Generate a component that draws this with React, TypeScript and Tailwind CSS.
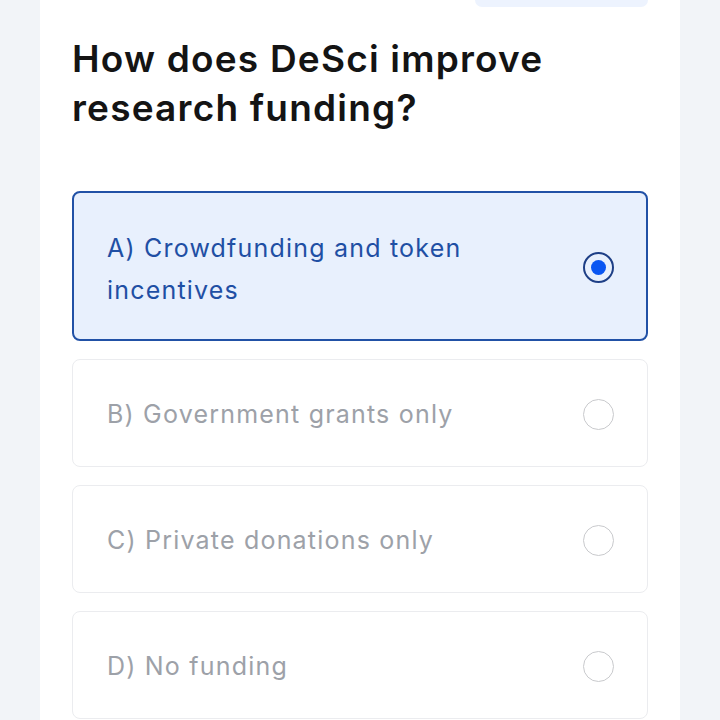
import React, { useState } from 'react';

const options = [
  { key: 'A', label: 'A) Crowdfunding and token incentives' },
  { key: 'B', label: 'B) Government grants only' },
  { key: 'C', label: 'C) Private donations only' },
  { key: 'D', label: 'D) No funding' },
];

const Radio: React.FC<{ checked: boolean }> = ({ checked }) =>
  checked ? (
    <span className="mb-1 flex h-[31px] w-[31px] shrink-0 items-center justify-center rounded-full border-2 border-[#1e3f86]">
      <span className="h-[15px] w-[15px] rounded-full bg-[#0a56f2]" />
    </span>
  ) : (
    <span className="h-[31px] w-[31px] shrink-0 rounded-full border-[1.5px] border-[#c9cacd]" />
  );

export default function App() {
  const [selected, setSelected] = useState('A');

  return (
    <div className="min-h-[720px] bg-[#f2f4f8] px-10" style={{ fontFamily: 'Inter, "Noto Sans", sans-serif' }}>
      <div className="min-h-[720px] bg-white px-8">
        <div className="flex justify-end">
          <div className="h-[7px] w-[173px] rounded-b-lg bg-[#edf3fe]" />
        </div>

        <h1 className="mt-[27px] text-[37px] font-semibold leading-[49px] tracking-[1.2px] text-[#141414]">
          How does DeSci improve
          <br />
          research funding?
        </h1>

        <div className="mt-[59px] flex flex-col gap-[18px]">
          {options.map((o) => {
            const checked = selected === o.key;
            return (
              <button
                key={o.key}
                onClick={() => setSelected(o.key)}
                className={
                  checked
                    ? 'flex items-center justify-between rounded-lg border-2 border-[#2151a6] bg-[#e8f0fd] pb-[28px] pl-[33px] pr-[32px] pt-[34px] text-left'
                    : 'flex items-center justify-between rounded-lg border border-[#ebecef] bg-white pb-[31px] pl-[34px] pr-[33px] pt-[33px] text-left'
                }
              >
                <span
                  className={
                    checked
                      ? 'max-w-[400px] text-[25px] leading-[42px] tracking-[1.2px] text-[#1f4fa4]'
                      : 'text-[25px] leading-[42px] tracking-[1.2px] text-[#9da1a8]'
                  }
                >
                  {o.label}
                </span>
                <Radio checked={checked} />
              </button>
            );
          })}
        </div>
      </div>
    </div>
  );
}
